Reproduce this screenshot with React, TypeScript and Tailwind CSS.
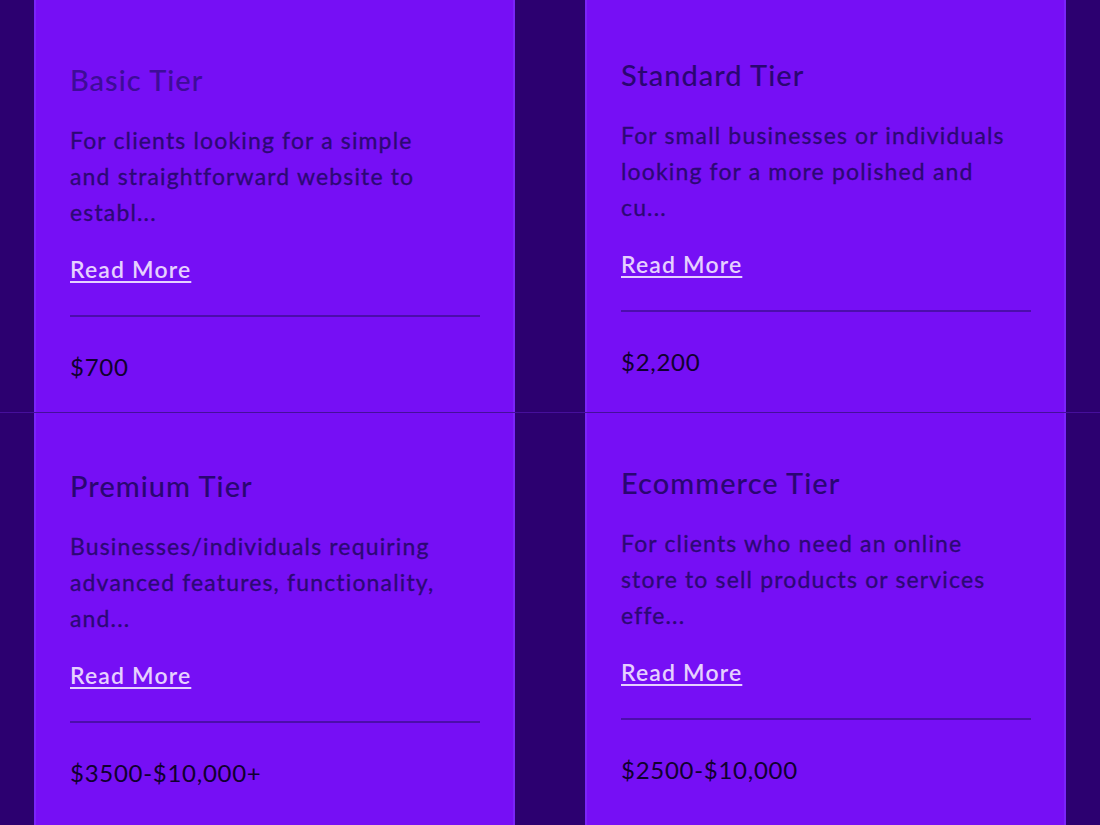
const tiers = [
    {
        title: 'Basic Tier',
        lines: ['For clients looking for a simple', 'and straightforward website to', 'establ...'],
        price: '$700',
        pad: 'pt-[62px]',
        titleColor: 'text-[#3e0c98]',
    },
    {
        title: 'Standard Tier',
        lines: ['For small businesses or individuals', 'looking for a more polished and', 'cu...'],
        price: '$2,200',
        pad: 'pt-[57px]',
        titleColor: 'text-[#2a0672]',
    },
    {
        title: 'Premium Tier',
        lines: ['Businesses/individuals requiring', 'advanced features, functionality,', 'and...'],
        price: '$3500-$10,000+',
        pad: 'pt-[55px]',
        titleColor: 'text-[#2a0672]',
    },
    {
        title: 'Ecommerce Tier',
        lines: ['For clients who need an online', 'store to sell products or services', 'effe...'],
        price: '$2500-$10,000',
        pad: 'pt-[52px]',
        titleColor: 'text-[#2a0672]',
    },
];

type Tier = (typeof tiers)[number];

function TierCard({ tier }: { tier: Tier }) {
    return (
        <div className={`h-full bg-[#760ff5] border-x-2 border-[#7b24f9] pl-[34px] pr-[33px] ${tier.pad}`}>
            <h2 className={`text-[29px] leading-[36px] font-medium tracking-[0.035em] ${tier.titleColor}`}>
                {tier.title}
            </h2>
            <p className="mt-[24px] text-[23px] leading-[36px] tracking-[0.05em] text-[#2c0874] [-webkit-text-stroke:0.3px_#2c0874]">
                {tier.lines.map((line) => (
                    <span key={line} className="block whitespace-nowrap">
                        {line}
                    </span>
                ))}
            </p>
            <a
                href="#"
                className="mt-[21px] inline-block text-[23px] leading-[36px] font-semibold tracking-[0.05em] text-[#e6d0ff] underline decoration-2 underline-offset-[3px]"
            >
                Read More
            </a>
            <div className="mt-[28px] h-[2px] bg-[#4c0dac]" />
            <div className="mt-[32px] text-[24px] leading-[36px] tracking-[0.03em] text-[#10002f]">
                {tier.price}
            </div>
        </div>
    );
}

export default function App() {
    return (
        <div
            className="h-[825px] w-[1100px] overflow-hidden bg-[#2c0070]"
            style={{ fontFamily: 'Lato, "Noto Sans", sans-serif' }}
        >
            <div className="grid h-[412px] grid-cols-2 gap-[70px] px-[34px]">
                <TierCard tier={tiers[0]} />
                <TierCard tier={tiers[1]} />
            </div>
            <div className="h-px bg-[#8232ff]/30" />
            <div className="grid h-[412px] grid-cols-2 gap-[70px] px-[34px]">
                <TierCard tier={tiers[2]} />
                <TierCard tier={tiers[3]} />
            </div>
        </div>
    );
}
